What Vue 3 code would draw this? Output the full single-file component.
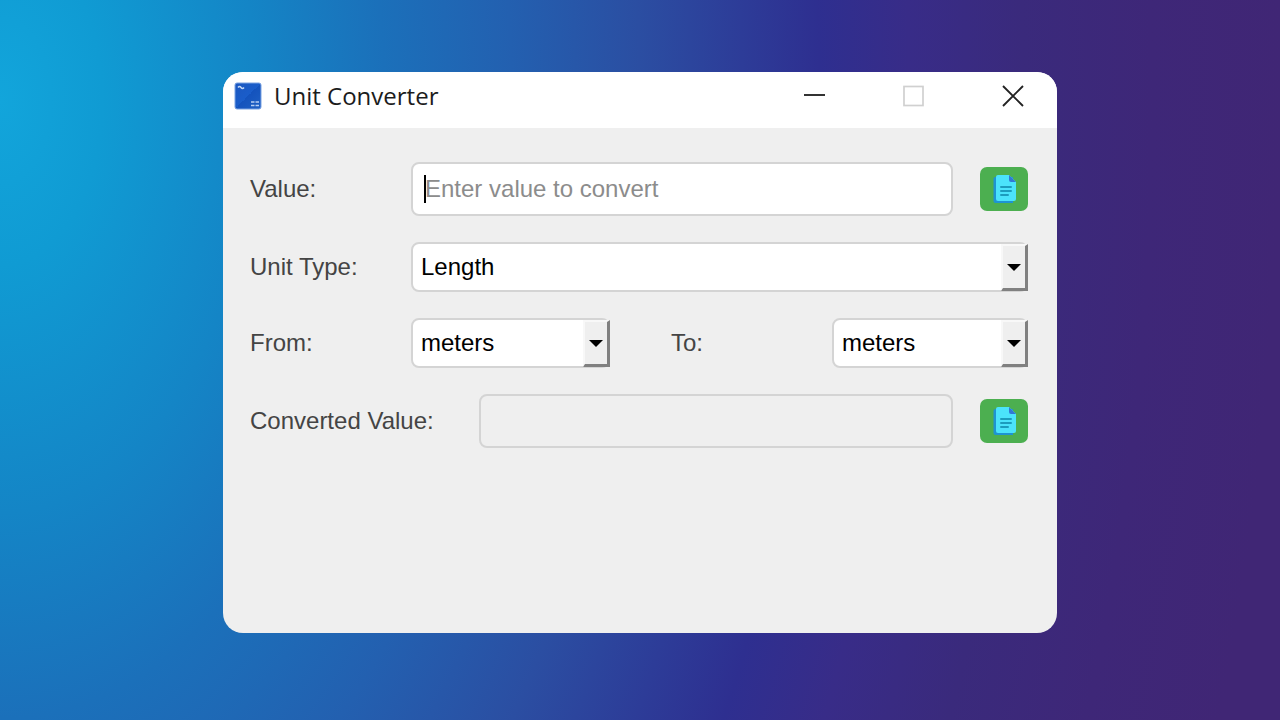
<script setup>
import { ref, computed } from 'vue'

const factors = {
  Length: { meters: 1, kilometers: 1000, feet: 0.3048, miles: 1609.344 },
  Weight: { grams: 1, kilograms: 1000, pounds: 453.59237 },
}

const value = ref('')
const unitType = ref('Length')
const from = ref('meters')
const to = ref('meters')

const units = computed(() => Object.keys(factors[unitType.value]))
const converted = computed(() => {
  if (value.value === '' || Number.isNaN(Number(value.value))) return ''
  const table = factors[unitType.value]
  return String((Number(value.value) * table[from.value]) / table[to.value])
})

function resetUnits() {
  from.value = units.value[0]
  to.value = units.value[0]
}

function copy(text) {
  navigator.clipboard?.writeText(text)
}
</script>

<template>
  <main class="desktop">
    <section class="window">
      <header class="titlebar">
        <svg class="app-icon" viewBox="0 0 28 28" aria-hidden="true">
          <defs>
            <linearGradient id="tile" x1="0" y1="0" x2="1" y2="1">
              <stop offset="0" stop-color="#1b57c0" />
              <stop offset="0.5" stop-color="#1a5dca" />
              <stop offset="0.5" stop-color="#1453bd" />
              <stop offset="1" stop-color="#1e5fc4" />
            </linearGradient>
          </defs>
          <rect x="1" y="1" width="26" height="26" rx="2" fill="url(#tile)" stroke="#7ba3e2" />
          <path d="M4 5.500q1.500-2 3 0t3 0" fill="none" stroke="#c4d7f5" stroke-width="1.500" />
          <path d="M17 20h3.500M21.500 20h3.500M17 23.500h3.500M21.500 23.500h3.500" stroke="#b5cdf2" stroke-width="1.500" />
        </svg>
        <h1 class="title">Unit Converter</h1>
        <div class="controls">
          <button class="control" type="button" aria-label="Minimize">
            <svg viewBox="0 0 24 24"><path d="M2 11h21" stroke="#333" stroke-width="2" /></svg>
          </button>
          <button class="control" type="button" aria-label="Maximize" disabled>
            <svg viewBox="0 0 24 24"><rect x="3" y="2.500" width="19" height="19" fill="none" stroke="#d0d0d0" stroke-width="1.700" /></svg>
          </button>
          <button class="control" type="button" aria-label="Close">
            <svg viewBox="0 0 24 24"><path d="M3 2l20 20M23 2L3 22" stroke="#222" stroke-width="1.900" /></svg>
          </button>
        </div>
      </header>

      <form class="form" @submit.prevent>
        <div class="row">
          <label class="label" for="value">Value:</label>
          <div class="field">
            <input id="value" v-model="value" class="box" type="text" placeholder="Enter value to convert" />
            <span v-if="!value" class="caret"></span>
          </div>
          <button class="copy" type="button" aria-label="Copy value" @click="copy(value)">
            <svg viewBox="0 0 24 28" aria-hidden="true">
              <path d="M3.500 2H21v26H3.500q-2 0-2-2V4q0-2 2-2z" fill="#1e94d2" />
              <path d="M6 0h11l7 7v17q0 2-2 2H6q-2 0-2-2V2q0-2 2-2z" fill="#4be3fb" />
              <path d="M17 0l7 7h-5q-2 0-2-2z" fill="#3278d4" />
              <path d="M9 12h10M9 16h10M9 20h7" stroke="#1c9cbd" stroke-width="2" stroke-linecap="round" />
            </svg>
          </button>
        </div>

        <div class="row">
          <label class="label" for="type">Unit Type:</label>
          <div class="field">
            <select id="type" v-model="unitType" class="box select" @change="resetUnits">
              <option v-for="(table, name) in factors" :key="name">{{ name }}</option>
            </select>
            <span class="drop"></span>
          </div>
        </div>

        <div class="pair">
          <div class="row">
            <label class="label" for="from">From:</label>
            <div class="field">
              <select id="from" v-model="from" class="box select">
                <option v-for="unit in units" :key="unit">{{ unit }}</option>
              </select>
              <span class="drop"></span>
            </div>
          </div>
          <div class="row">
            <label class="label" for="to">To:</label>
            <div class="field">
              <select id="to" v-model="to" class="box select">
                <option v-for="unit in units" :key="unit">{{ unit }}</option>
              </select>
              <span class="drop"></span>
            </div>
          </div>
        </div>

        <div class="row">
          <label class="label wide" for="result">Converted Value:</label>
          <div class="field">
            <input id="result" class="box readonly" type="text" :value="converted" readonly />
          </div>
          <button class="copy" type="button" aria-label="Copy converted value" @click="copy(converted)">
            <svg viewBox="0 0 24 28" aria-hidden="true">
              <path d="M3.500 2H21v26H3.500q-2 0-2-2V4q0-2 2-2z" fill="#1e94d2" />
              <path d="M6 0h11l7 7v17q0 2-2 2H6q-2 0-2-2V2q0-2 2-2z" fill="#4be3fb" />
              <path d="M17 0l7 7h-5q-2 0-2-2z" fill="#3278d4" />
              <path d="M9 12h10M9 16h10M9 20h7" stroke="#1c9cbd" stroke-width="2" stroke-linecap="round" />
            </svg>
          </button>
        </div>
      </form>
    </section>
  </main>
</template>

<style>
body {
  margin: 0;
}
</style>

<style scoped>
* {
  box-sizing: border-box;
}

.desktop {
  display: flex;
  min-height: 100vh;
  padding: 72px 223px 87px;
  font-family: "Liberation Sans", Arial, sans-serif;
  font-size: 24px;
  background: radial-gradient(
    ellipse 100% 286% at 0 14%,
    #12a5db 0%,
    #109bd3 8%,
    #1485c6 20%,
    #1b70ba 30%,
    #2360b0 40%,
    #2b4ea2 50%,
    #2d3c98 58%,
    #2e2f90 64%,
    #382c88 71%,
    #3a2a7c 80%,
    #3e2778 90%,
    #402675 100%
  );
}

.window {
  flex: 1;
  min-width: 0;
  overflow: hidden;
  border-radius: 20px;
  background: #efefef;
}

.titlebar {
  display: flex;
  align-items: center;
  height: 56px;
  padding: 0 33px 8px 11px;
  background: #fff;
}

.app-icon {
  width: 28px;
  height: 28px;
}

.title {
  flex: 1;
  margin: 0 0 0 12px;
  font-family: "Open Sans", "Noto Sans", sans-serif;
  font-size: 24px;
  font-weight: 400;
  line-height: 32px;
  color: #1c1c1c;
}

.controls {
  display: flex;
  gap: 75px;
}

.control {
  width: 24px;
  height: 24px;
  padding: 0;
  border: 0;
  background: none;
}

.control svg {
  display: block;
  width: 24px;
  height: 24px;
}

.form {
  display: flex;
  flex-direction: column;
  gap: 26px;
  padding: 34px 29px 34px 27px;
}

.row {
  display: flex;
  align-items: center;
}

.pair {
  display: grid;
  grid-template-columns: 360fr 357fr;
  gap: 61px;
}

.label {
  flex: none;
  width: 161px;
  line-height: 28px;
  color: #444;
}

.label.wide {
  width: 229px;
}

.field {
  position: relative;
  flex: 1;
  min-width: 0;
}

.box {
  display: block;
  width: 100%;
  height: 54px;
  padding: 0 12px;
  border: 2px solid #d4d4d4;
  border-radius: 8px;
  outline: 0;
  background: #fff;
  font: inherit;
  color: #000;
  caret-color: transparent;
}

.box::placeholder {
  color: #8c8c8c;
  opacity: 1;
}

.readonly {
  background: #efefef;
}

.select {
  height: 50px;
  padding: 0 32px 2px 8px;
  appearance: none;
}

.caret {
  position: absolute;
  top: 13px;
  left: 13px;
  width: 2px;
  height: 28px;
  background: #000;
}

.drop {
  position: absolute;
  top: 2px;
  right: 0;
  bottom: 1px;
  display: flex;
  align-items: center;
  justify-content: center;
  width: 27px;
  border: solid;
  border-width: 2px 3px 3px 2px;
  border-color: #f8f8f8 #808080 #808080 #f8f8f8;
  background: #efefef;
  pointer-events: none;
}

.drop::after {
  content: "";
  border: solid transparent;
  border-width: 7px 7px 0;
  border-top-color: #000;
}

.copy {
  display: flex;
  flex: none;
  align-items: center;
  justify-content: center;
  width: 48px;
  height: 44px;
  margin-left: 27px;
  padding: 0;
  border: 0;
  border-radius: 7px;
  background: #4caf50;
}

.copy svg {
  width: 24px;
  height: 28px;
}
</style>
